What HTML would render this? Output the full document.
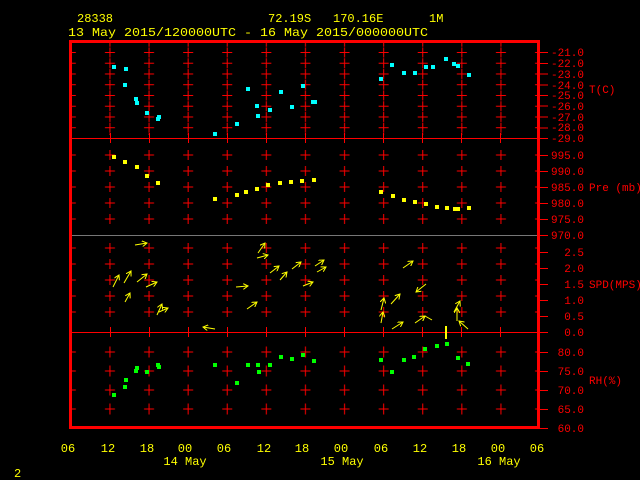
<!DOCTYPE html>
<html><head><meta charset="utf-8"><style>html,body{margin:0;padding:0;background:#000;width:640px;height:480px;overflow:hidden}</style></head><body>
<svg width="640" height="480" viewBox="0 0 640 480" xmlns="http://www.w3.org/2000/svg" font-family="Liberation Mono, monospace">
<defs>
<pattern id="pT" patternUnits="userSpaceOnUse" x="90.45" y="47.1" width="39.1" height="10.75"><path d="M14.5 5.4h10M19.5 0.4v10" stroke="#f00" stroke-width="1"/></pattern>
<pattern id="pP" patternUnits="userSpaceOnUse" x="90.45" y="147" width="39.1" height="16"><path d="M14.5 8h10M19.5 3v10" stroke="#f00" stroke-width="1"/></pattern>
<pattern id="pR" patternUnits="userSpaceOnUse" x="90.45" y="342.5" width="39.1" height="19"><path d="M14.5 9.5h10M19.5 4v11" stroke="#f00" stroke-width="1"/></pattern>
<marker id="ah" markerWidth="6" markerHeight="6" refX="5" refY="3" orient="auto" markerUnits="userSpaceOnUse"><path d="M0 0L5 3L0 6" fill="none" stroke="#ff0" stroke-width="1"/></marker>
</defs>
<rect x="72" y="43" width="466" height="92" fill="url(#pT)"/>
<rect x="72" y="147" width="466" height="80" fill="url(#pP)"/>
<rect x="72" y="244" width="466" height="80" fill="url(#pP)" transform="translate(0,-3)"/>
<rect x="72" y="342" width="466" height="76" fill="url(#pR)"/>
<g stroke="#f00" stroke-width="1">
<line x1="72" y1="138.5" x2="539" y2="138.5"/>
<line x1="72" y1="332.5" x2="539" y2="332.5"/>
<path d="M110.5 133v10M149.5 133v10M188.5 133v10M227.5 133v10M266.5 133v10M305.5 133v10M344.5 133v10M383.5 133v10M422.5 133v10M461.5 133v10M500.5 133v10"/>
<path d="M110.5 327v10M149.5 327v10M188.5 327v10M227.5 327v10M266.5 327v10M305.5 327v10M344.5 327v10M383.5 327v10M422.5 327v10M461.5 327v10M500.5 327v10"/>
<path d="M540 52.5h8M540 63.5h8M540 74h8M540 85h8M540 95.5h8M540 106h8M540 117h8M540 128h8M540 138.5h8M540 155.5h8M540 171.5h8M540 187.5h8M540 203.5h8M540 219.5h8M540 235.5h8M540 252.5h8M540 268.5h8M540 284.5h8M540 300.5h8M540 316.5h8M540 332.5h8M540 352.5h8M540 371.5h8M540 390.5h8M540 409.5h8M540 428.5h8"/>
</g>
<line x1="72" y1="235.5" x2="539" y2="235.5" stroke="#777" stroke-width="1"/>
<rect x="70.5" y="41.5" width="468" height="386" fill="none" stroke="#f00" stroke-width="3"/>
<g fill="#0ff">
<rect x="112" y="65" width="4" height="4"/><rect x="124" y="67" width="4" height="4"/><rect x="123" y="83" width="4" height="4"/><rect x="134" y="97" width="4" height="4"/><rect x="135" y="101" width="4" height="4"/><rect x="145" y="111" width="4" height="4"/><rect x="156" y="117" width="4" height="4"/><rect x="157" y="115" width="4" height="4"/><rect x="213" y="132" width="4" height="4"/><rect x="235" y="122" width="4" height="4"/><rect x="246" y="87" width="4" height="4"/><rect x="255" y="104" width="4" height="4"/><rect x="256" y="114" width="4" height="4"/><rect x="268" y="108" width="4" height="4"/><rect x="279" y="90" width="4" height="4"/><rect x="290" y="105" width="4" height="4"/><rect x="301" y="84" width="4" height="4"/><rect x="311" y="100" width="6" height="4"/><rect x="379" y="77" width="4" height="4"/><rect x="390" y="63" width="4" height="4"/><rect x="402" y="71" width="4" height="4"/><rect x="413" y="71" width="4" height="4"/><rect x="424" y="65" width="4" height="4"/><rect x="431" y="65" width="4" height="4"/><rect x="444" y="57" width="4" height="4"/><rect x="452" y="62" width="4" height="4"/><rect x="456" y="64" width="4" height="4"/><rect x="467" y="73" width="4" height="4"/>
</g>
<g fill="#ff0">
<rect x="112" y="155" width="4" height="4"/><rect x="123" y="160" width="4" height="4"/><rect x="135" y="165" width="4" height="4"/><rect x="145" y="174" width="4" height="4"/><rect x="156" y="181" width="4" height="4"/><rect x="213" y="197" width="4" height="4"/><rect x="235" y="193" width="4" height="4"/><rect x="244" y="190" width="4" height="4"/><rect x="255" y="187" width="4" height="4"/><rect x="266" y="183" width="4" height="4"/><rect x="278" y="181" width="4" height="4"/><rect x="289" y="180" width="4" height="4"/><rect x="300" y="179" width="4" height="4"/><rect x="312" y="178" width="4" height="4"/><rect x="379" y="190" width="4" height="4"/><rect x="391" y="194" width="4" height="4"/><rect x="402" y="198" width="4" height="4"/><rect x="413" y="200" width="4" height="4"/><rect x="424" y="202" width="4" height="4"/><rect x="435" y="205" width="4" height="4"/><rect x="445" y="206" width="4" height="4"/><rect x="453" y="207" width="4" height="4"/><rect x="456" y="207" width="4" height="4"/><rect x="467" y="206" width="4" height="4"/>
<rect x="445" y="326" width="2" height="13"/>
</g>
<g fill="#0f0">
<rect x="112" y="393" width="4" height="4"/><rect x="123" y="385" width="4" height="4"/><rect x="124" y="378" width="4" height="4"/><rect x="134" y="369" width="4" height="4"/><rect x="135" y="366" width="4" height="4"/><rect x="145" y="370" width="4" height="4"/><rect x="156" y="363" width="4" height="4"/><rect x="157" y="365" width="4" height="4"/><rect x="213" y="363" width="4" height="4"/><rect x="235" y="381" width="4" height="4"/><rect x="246" y="363" width="4" height="4"/><rect x="256" y="363" width="4" height="4"/><rect x="257" y="370" width="4" height="4"/><rect x="268" y="363" width="4" height="4"/><rect x="279" y="355" width="4" height="4"/><rect x="290" y="357" width="4" height="4"/><rect x="301" y="353" width="4" height="4"/><rect x="312" y="359" width="4" height="4"/><rect x="379" y="358" width="4" height="4"/><rect x="390" y="370" width="4" height="4"/><rect x="402" y="358" width="4" height="4"/><rect x="412" y="355" width="4" height="4"/><rect x="423" y="347" width="4" height="4"/><rect x="435" y="344" width="4" height="4"/><rect x="445" y="342" width="4" height="4"/><rect x="456" y="356" width="4" height="4"/><rect x="466" y="362" width="4" height="4"/>
</g>
<g stroke="#ff0" stroke-width="1" fill="none" marker-end="url(#ah)">
<path d="M135 245L147 243"/><path d="M113 287L119 275"/><path d="M124 283L131 271"/><path d="M137 282L147 274"/><path d="M146 287L157 282"/><path d="M125 302L130 293"/><path d="M157 315L162 304"/><path d="M159 312L168 308"/><path d="M215 329L203 327"/><path d="M258 253L265 243"/><path d="M257 258L268 255"/><path d="M270 273L279 266"/><path d="M280 280L287 272"/><path d="M292 269L301 262"/><path d="M315 266L324 260"/><path d="M317 272L326 267"/><path d="M303 286L313 282"/><path d="M236 287L248 286"/><path d="M247 309L257 302"/>
<path d="M403 268L413 261"/><path d="M426 284L416 292"/><path d="M391 304L400 294"/><path d="M381 310L384 298"/><path d="M381 323L383 312"/><path d="M392 329L403 322"/><path d="M415 323L425 316"/><path d="M454 312L460 301"/><path d="M457 321L457 308"/><path d="M468 329L459 321"/>
</g>
<line x1="425" y1="316" x2="432" y2="320" stroke="#ff0"/>
<g fill="#ff0" font-size="12">
<text x="77" y="22">28338</text>
<text x="268" y="22">72.19S</text>
<text x="333" y="22">170.16E</text>
<text x="429" y="22">1M</text>
<text x="68" y="36" textLength="360" lengthAdjust="spacingAndGlyphs">13 May 2015/120000UTC - 16 May 2015/000000UTC</text>
<g text-anchor="middle">
<text x="68" y="452">06</text><text x="108" y="452">12</text><text x="147" y="452">18</text><text x="185" y="452">00</text><text x="224" y="452">06</text><text x="264" y="452">12</text><text x="302" y="452">18</text><text x="341" y="452">00</text><text x="381" y="452">06</text><text x="420" y="452">12</text><text x="459" y="452">18</text><text x="498" y="452">00</text><text x="537" y="452">06</text>
<text x="185" y="465">14 May</text><text x="342" y="465">15 May</text><text x="499" y="465">16 May</text>
</g>
<text x="14" y="477">2</text>
</g>
<g fill="#f00" font-size="11" text-anchor="end">
<text x="584" y="56">-21.0</text><text x="584" y="67">-22.0</text><text x="584" y="78">-23.0</text><text x="584" y="89">-24.0</text><text x="584" y="99">-25.0</text><text x="584" y="110">-26.0</text><text x="584" y="121">-27.0</text><text x="584" y="131">-28.0</text><text x="584" y="142">-29.0</text>
<text x="584" y="159">995.0</text><text x="584" y="175">990.0</text><text x="584" y="191">985.0</text><text x="584" y="207">980.0</text><text x="584" y="223">975.0</text><text x="584" y="239">970.0</text>
<text x="584" y="256">2.5</text><text x="584" y="272">2.0</text><text x="584" y="288">1.5</text><text x="584" y="304">1.0</text><text x="584" y="320">0.5</text><text x="584" y="336">0.0</text>
<text x="584" y="356">80.0</text><text x="584" y="375">75.0</text><text x="584" y="394">70.0</text><text x="584" y="413">65.0</text><text x="584" y="432">60.0</text>
</g>
<g fill="#f00" font-size="11">
<text x="589" y="93">T(C)</text><text x="589" y="191">Pre (mb)</text><text x="589" y="288">SPD(MPS)</text><text x="589" y="384">RH(%)</text>
</g>
</svg>
</body></html>
